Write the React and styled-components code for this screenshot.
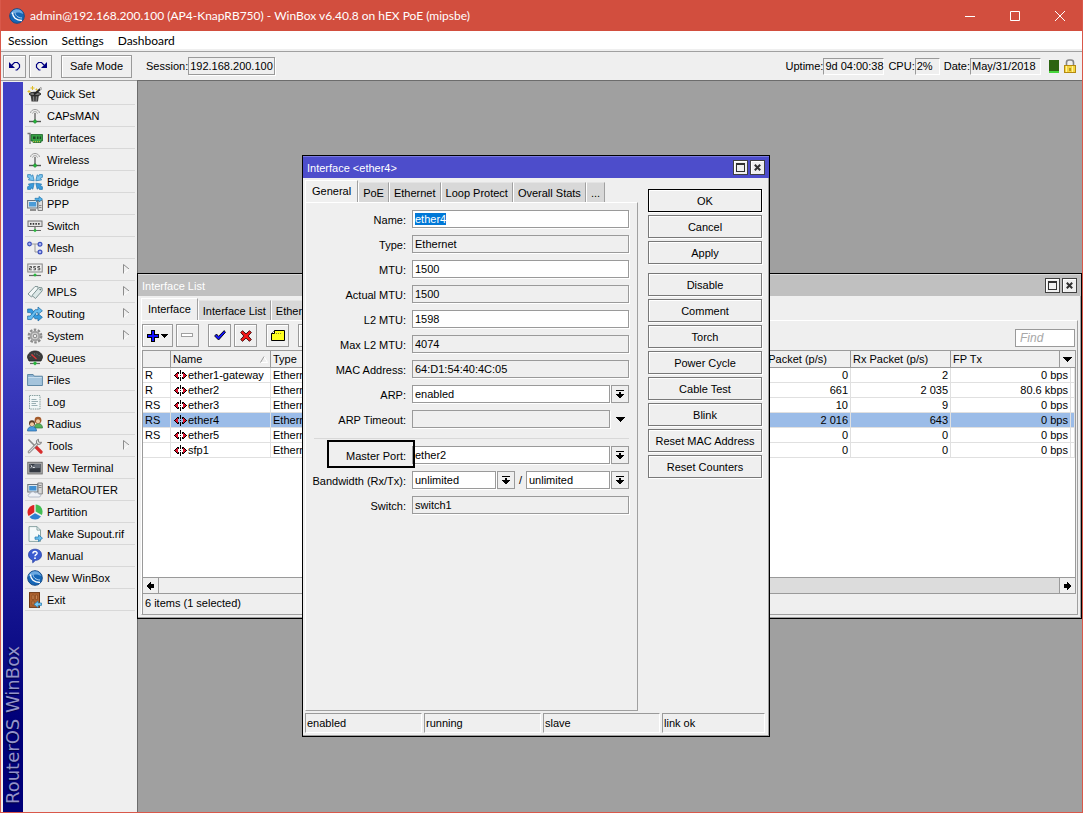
import React, { useEffect, useRef, useState } from 'react';
import styled, { createGlobalStyle, css } from 'styled-components';

const GlobalStyle = createGlobalStyle`
  * {
    box-sizing: border-box;
  }
  body {
    margin: 0;
    background: #a0a0a0;
  }
  body, button, input, select, table {
    font-family: 'Liberation Sans', Arial, sans-serif;
    font-size: 11px;
    line-height: 14px;
    color: #000;
  }
  button {
    padding: 0;
    margin: 0;
  }
  svg {
    flex: none;
  }
`;

/* ---------- icons ---------- */

const Svg = ({ size = 16, children, ...rest }) => (
  <svg width={size} height={size} viewBox={`0 0 ${size} ${size}`} fill="none" aria-hidden="true" {...rest}>
    {children}
  </svg>
);

const WinBoxIcon = () => (
  <Svg>
    <circle cx="8" cy="8" r="7.3" fill="#1667b7" stroke="#164a86" strokeWidth="1" />
    <path d="M1.500 6.500C2 3.500 5 1.300 8 1.300c3 0 5.500 2 6.300 4.700C11 3.800 6 3.800 1.500 6.500z" fill="#6aa9e2" />
    <path d="M3.500 4.500c0 4.500 3.500 8 9.500 8" stroke="#fff" strokeWidth="1.300" />
    <path d="M6 4.500c.3 3 2.800 5.300 7 5.500" stroke="#b5d5f2" strokeWidth="1" />
  </Svg>
);

const WandIcon = () => (
  <Svg>
    <path d="M3.500 8h8.500l-1 7.500H4.500z" fill="#3f3f3f" />
    <ellipse cx="8" cy="8" rx="5.800" ry="1.700" fill="#777" stroke="#222" />
    <path d="M6.500 10.500l.2 4.500M9.500 10.500l-.3 4.500" stroke="#999" strokeWidth=".8" />
    <path d="M7 8.500L14.500 2" stroke="#222" strokeWidth="1.800" />
    <path d="M13 3.400l1.500-1.400" stroke="#ddd" strokeWidth="1.400" />
    <path d="M5.500 0v4M3.500 2h4M2 4v3M.5 5.500h3M9.500 2.500v2M8.500 3.500h2" stroke="#dfbd26" />
  </Svg>
);

const AntennaIcon = () => (
  <Svg>
    <path d="M3.500 5C4 2.500 6 1.500 8 1.500S12 2.500 12.500 5M5.500 5.500C6 4 7 3.700 8 3.700s2 .3 2.500 1.800" stroke="#9a9a9a" />
    <path d="M8 5v8" stroke="#777" strokeWidth="1.600" />
    <path d="M2 13.500h12" stroke="#555" strokeWidth="1.400" />
    <path d="M6 13.500L8 11.500l2 2-2 2z" fill="#22b83a" stroke="#12761f" strokeWidth=".6" />
  </Svg>
);

const CardIcon = () => (
  <Svg>
    <path d="M.5 3.500H3V14" stroke="#777" strokeWidth="1.400" />
    <path d="M4 4.500h11.500V11H14v1.500H6V11H4z" fill="#35a045" stroke="#1c6328" strokeWidth=".8" />
    <path d="M6 6.500h2.500V9H6zM10 6.500h1.500V9H10zM12.700 6.500H14V9h-1.300z" fill="#1d4a26" />
    <path d="M6 11.700h8" stroke="#d7c441" strokeDasharray="1 1" />
  </Svg>
);

const BridgeIcon = () => (
  <Svg>
    <g stroke="#2577ad" strokeWidth=".7">
      <path d="M.6.6h3l.8 1.500L5.800.8l1.400 6-5.900-.9 1.400-1.500L.6 3.300z" fill="#7cc5ee" />
      <path d="M15.400.6h-3l-.8 1.500L10.200.8l-1.400 6 5.900-.9-1.400-1.500 2.100-1.100z" fill="#7cc5ee" />
      <path d="M.6 15.400h3l.8-1.500 1.400 1.300 1.400-6-5.900.9 1.400 1.500-2.100 1.100z" fill="#3b9bdc" />
      <path d="M15.400 15.400h-3l-.8-1.500-1.400 1.300-1.400-6 5.900.9-1.400 1.500 2.100 1.100z" fill="#3b9bdc" />
    </g>
  </Svg>
);

const PppIcon = () => (
  <Svg>
    <path d="M11 4.500h4.500v10H11z" fill="#dcdcdc" stroke="#777" strokeWidth=".9" />
    <path d="M12 9.500h2.500M12 11.500h2.500" stroke="#888" />
    <rect x=".6" y="4.500" width="10" height="7.500" fill="#dbe7ef" stroke="#68727c" />
    <rect x="2" y="6" width="7.200" height="4.500" fill="#4b9cd8" />
    <path d="M3 14h6" stroke="#777" strokeWidth="1.600" />
    <path d="M8 3.500V2.300h4V.5l3.500 2.700L12 6V4.300H9.500V6" fill="#55b4ea" stroke="#1b71aa" strokeWidth=".7" />
  </Svg>
);

const SwitchIcon = () => (
  <Svg>
    <rect x="1" y="3" width="14" height="5.500" fill="#e5e5e5" stroke="#707070" />
    <path d="M3 5.800h10" stroke="#333" strokeWidth="1.800" strokeDasharray="1.500 1.200" />
    <path d="M2 12.500h12M8 9v3" stroke="#666" strokeWidth="1.200" />
    <path d="M6.200 12.500L8 10.700l1.800 1.800L8 14.300z" fill="#27b63c" />
  </Svg>
);

const MeshIcon = () => (
  <Svg>
    <path d="M4 4h8M8 4v8h3" stroke="#9a9a9a" />
    <g fill="#a9b5f1" stroke="#3d50bd" strokeWidth="1.200">
      <circle cx="2.500" cy="4" r="1.800" />
      <circle cx="13" cy="4.200" r="1.900" />
      <circle cx="13" cy="12" r="1.900" />
    </g>
  </Svg>
);

const IpIcon = () => (
  <Svg>
    <rect x=".8" y="2" width="14.400" height="8" fill="#eee" stroke="#858585" />
    <path
      d="M2.500 4.500h2V6h-2v1.800h2.300M8.800 4.500H6.700V6h1.800v1.800H6.500M13 4.500h-2.200V6h2v1.800h-2.200"
      stroke="#444"
      strokeWidth=".9"
    />
    <path d="M2 13.500h12" stroke="#666" strokeWidth="1.200" />
    <path d="M6.200 13L8 11.200 9.800 13 8 14.800z" fill="#27b63c" />
  </Svg>
);

const TagsIcon = () => (
  <Svg>
    <path d="M1 10l7-7.500 3 .2.200 2.800L4.500 13z" fill="#f3f7f7" stroke="#738a8a" strokeWidth=".9" />
    <path d="M5 11.500L12 3.500l3 .3.200 3L8.500 14.500z" fill="#dce8e8" stroke="#738a8a" strokeWidth=".9" />
    <circle cx="13.200" cy="5.600" r=".8" fill="#637575" />
  </Svg>
);

const RoutingIcon = () => (
  <Svg>
    <path
      d="M.6 3h4l5 6.500h1.400V7.500L15.400 11.300 11 15v-2.200H8L3.500 6.600H.6z"
      fill="#359be0"
      stroke="#1a659d"
      strokeWidth=".7"
    />
    <path
      d="M.6 13.500V10h2.600l5-6.300H11V1l4.400 3.800L11 8.500V6.600H9.500l-5.200 7z"
      fill="#67bdf0"
      stroke="#1a659d"
      strokeWidth=".7"
    />
  </Svg>
);

const GearIcon = () => (
  <Svg>
    <circle cx="8" cy="8" r="6.300" stroke="#8a8a8a" strokeWidth="2.200" strokeDasharray="2.500 1.458" />
    <circle cx="8" cy="8" r="4.300" fill="#d0d0d0" stroke="#a2a2a2" strokeWidth="2" />
    <circle cx="8" cy="8" r="1.800" fill="#efefef" stroke="#858585" />
  </Svg>
);

const GaugeIcon = () => (
  <Svg>
    <path d="M.5 7.500C.5 3.500 4 1 8 1s7.500 2.500 7.500 6.500L14 11H2z" fill="#3d3d3d" stroke="#222" strokeWidth=".8" />
    <path d="M3 7a5.200 4.400 0 0110 0" stroke="#888" strokeDasharray="1 1.600" />
    <path d="M4.500 4.500l5 4.500" stroke="#e03535" strokeWidth="1.200" />
    <path d="M3 13.500h10" stroke="#666" strokeWidth="1.200" />
    <path d="M5.800 13.300L8 11.200l2.200 2.100L8 15.400z" fill="#27b63c" />
  </Svg>
);

const FolderIcon = () => (
  <Svg>
    <path d="M.6 13.500v-11h5.500l1.200 1.700h8.100v9.300z" fill="#8fb4d2" stroke="#54809f" strokeWidth=".9" />
    <path d="M1.200 6h13.600v7H1.200z" fill="#a4c4dc" />
    <path d="M1.200 5.500h13.600" stroke="#c7deee" />
  </Svg>
);

const LogIcon = () => (
  <Svg>
    <rect x="2.500" y="1.500" width="10.500" height="13.500" fill="#f2f7f7" stroke="#88a0a0" strokeDasharray="1.500 .8" />
    <path d="M4.500 5.500h5M4.500 7.500h6.500M4.500 9.500h4.500M4.500 11.500h6" stroke="#9bb0b4" />
  </Svg>
);

const UsersIcon = () => (
  <Svg>
    <path d="M7.500 12c0-3 1.500-4.500 3.800-4.500S15.500 9 15.500 12z" fill="#56b05a" stroke="#2d7a36" strokeWidth=".7" />
    <circle cx="11" cy="4.200" r="3.400" fill="#a3592a" />
    <circle cx="11" cy="5.200" r="2" fill="#f2c9a0" />
    <path d="M.5 15c0-3 1.800-4.500 4.500-4.500S9.500 12 9.500 15z" fill="#4a9de0" stroke="#235f9c" strokeWidth=".7" />
    <circle cx="5" cy="7.300" r="3" fill="#5b3a22" />
    <circle cx="5" cy="8.200" r="2" fill="#f2c9a0" />
  </Svg>
);

const ToolsIcon = () => (
  <Svg>
    <path d="M1.500 1.500L8 8" stroke="#8a8a8a" strokeWidth="1.600" />
    <path d="M8.500 8.500l5.500 5.500" stroke="#d72e2e" strokeWidth="3.200" strokeLinecap="round" />
    <path d="M2 14L11 5" stroke="#777" strokeWidth="2.600" strokeLinecap="round" />
    <path d="M2 14L11 5" stroke="#dadada" strokeWidth="1.200" strokeLinecap="round" />
    <path d="M14.500 4.200a2.600 2.600 0 11-3-2.900v2.500l1.600.6z" fill="#ddd" stroke="#777" strokeWidth=".9" />
  </Svg>
);

const TerminalIcon = () => (
  <Svg>
    <rect x=".8" y="2.300" width="14.400" height="11.600" fill="#b8b8b8" stroke="#6c6c6c" />
    <rect x="2.300" y="3.800" width="11.400" height="8.600" fill="#333942" />
    <path d="M8 4h5.500v4L2.500 8.500z" fill="#656c76" />
    <path d="M3.500 5l1.600 1.200L3.500 7.400M5.800 7.500h2" stroke="#fff" strokeWidth=".8" />
  </Svg>
);

const MetaIcon = () => (
  <Svg>
    <path d="M10.800 1h4.500v11h-4.500z" fill="#d8d8d8" stroke="#777" strokeWidth=".9" />
    <path d="M11.500 3.500h3M11.500 5.500h3" stroke="#888" />
    <rect x=".8" y="2.500" width="10" height="7.500" fill="#dce7ee" stroke="#6a747d" />
    <rect x="2.200" y="4" width="7.200" height="4.500" fill="#3f8fd2" />
    <path
      d="M3 15c-2.500 0-2.500-3 0-3.200C3.500 9.500 7 9 8 11c2-1 3.500 0 3.600 1 2.600-.2 2.800 3 .4 3z"
      fill="#eef1f6"
      stroke="#9ba5b8"
      strokeWidth=".7"
    />
  </Svg>
);

const PieIcon = () => (
  <Svg>
    <path d="M7.300 8.200V1A7.200 7.200 0 001.600 12z" fill="#dd2424" />
    <path d="M8.600 7.500V.6A7.200 7.200 0 0114.800 11z" fill="#42bd52" />
    <path d="M8 9.200l6 3.200A7.400 7.400 0 012.400 12.900z" fill="#2d80d0" />
  </Svg>
);

const SupoutIcon = () => (
  <Svg>
    <path d="M2 .6h8l3.500 3.500v11.300H2z" fill="#f5fafa" stroke="#7f9c9c" strokeWidth=".9" />
    <path d="M10 .6v3.500h3.500" stroke="#7f9c9c" strokeWidth=".9" />
    <path d="M8 11h3.500V8.800l4 3.400-4 3.300v-2.200H8z" fill="#69c0f0" stroke="#2076ad" strokeWidth=".7" />
  </Svg>
);

const ManualIcon = () => (
  <Svg>
    <path
      d="M8 1.200c4 0 6.500 2.300 6.500 5.600s-2.700 5.500-6 5.500l-2.800 2.500v-3C3.200 11.300 1.500 9.500 1.500 6.800c0-3.300 2.500-5.600 6.500-5.600z"
      fill="#3a5bd0"
      stroke="#2740a6"
      strokeWidth=".8"
    />
    <path d="M5.900 5.500c0-2.700 4.300-2.500 4.200-.2C10 6.700 8 6.700 8 8.200" stroke="#fff" strokeWidth="1.400" />
    <circle cx="8" cy="10.200" r=".9" fill="#fff" />
  </Svg>
);

const DoorIcon = () => (
  <Svg>
    <rect x="2.500" y=".6" width="10" height="14.800" fill="#ae6330" stroke="#6e3814" />
    <path d="M5 3h2v4.500H5zM8.500 3h2v4.500h-2zM5 9h2v4H5z" fill="#c98450" stroke="#7d431b" strokeWidth=".6" />
    <path d="M14.500 11H11V9l-4 3.400 4 3.200v-2.200h3.500z" fill="#7ccaf3" stroke="#2076ad" strokeWidth=".7" />
  </Svg>
);

const UndoIcon = ({ flip }) => (
  <svg width="12" height="10" viewBox="0 0 12 10" fill="none" transform={flip ? 'scale(-1 1)' : undefined} aria-hidden="true">
    <path d="M0 1v6h6z" fill="#000080" />
    <path d="M3 4l2.500-2.500h3l2 2.200v2.600L8 9H6.500" stroke="#000080" strokeWidth="1.200" />
  </svg>
);

const LockIcon = () => (
  <svg width="12" height="14" viewBox="0 0 12 14" fill="none" aria-hidden="true">
    <path d="M2.500 7V3.500C2.500 2 3.500 1 5 1h2c1.500 0 2.500 1 2.500 2.500V7" stroke="#858585" strokeWidth="1.600" />
    <rect x=".5" y="6.500" width="11" height="7" fill="#f5d640" stroke="#b48a10" />
    <path d="M2.500 7v6M8.500 7v6" stroke="#fff0a0" />
    <path d="M6 9v3" stroke="#7d5f0a" />
  </svg>
);

const PlusIcon = () => (
  <svg width="21" height="12" viewBox="0 0 21 12" shapeRendering="crispEdges" aria-hidden="true">
    <path d="M4 0h4v4h4v4H8v4H4V8H0V4h4z" fill="#000" />
    <path d="M5 1h2v4h4v2H7v4H5V7H1V5h4z" fill="#1010ff" />
    <path d="M14 4h7v1h-1v1h-1v1h-1v1h-1V7h-1V6h-1V5h-1z" fill="#000" />
  </svg>
);

const MinusIcon = () => (
  <svg width="13" height="5" viewBox="0 0 13 5" fill="none" shapeRendering="crispEdges" aria-hidden="true">
    <rect x=".5" y=".5" width="11" height="3" fill="#fff" stroke="#a0a0a0" />
  </svg>
);

const CheckIcon = () => (
  <svg width="12" height="11" viewBox="0 0 12 11" aria-hidden="true">
    <path d="M.6 6L2.500 4l2 2.400L10.200.6l1.200 1.800L4.600 10z" fill="#1010ff" stroke="#000" strokeWidth=".9" />
  </svg>
);

const CrossIcon = () => (
  <svg width="12" height="12" viewBox="0 0 12 12" aria-hidden="true">
    <path
      d="M2.500.7L6 3.900 9.500.7l1.800 1.800L8.200 6l3.100 3.500-1.800 1.800L6 8.100l-3.500 3.200L.7 9.500 3.800 6 .7 2.500z"
      fill="#f21515"
      stroke="#300"
      strokeWidth=".9"
    />
  </svg>
);

const NoteIcon = () => (
  <svg width="14" height="11" viewBox="0 0 14 11" aria-hidden="true">
    <path d="M3.500.5h10v10H.5v-7z" fill="#ffff20" stroke="#000" />
    <path d="M.5 3.500h3v-3" fill="#fff" stroke="#000" />
    <path d="M5 3.500h6" stroke="#8c8c30" strokeDasharray="1 1" />
  </svg>
);

const PortIcon = () => (
  <svg width="13" height="11" viewBox="0 0 13 11" shapeRendering="crispEdges" aria-hidden="true">
    <path d="M0 5h1V4h1V3h1V2h2v2H4v3h1v2H3V8H2V7H1V6H0z" fill="#000" />
    <path d="M13 5h-1V4h-1V3h-1V2H8v2h1v3H8v2h2V8h1V7h1V6h1z" fill="#000" />
    <path d="M1 5h1V4h1V3h1v5H3V7H2V6H1z" fill="#e0102a" />
    <path d="M12 5h-1V4h-1V3H9v5h1V7h1V6h1z" fill="#e0102a" />
    <path d="M6 0h1v4H6zM6 5h1v1H6zM6 7h1v4H6z" fill="#000" />
  </svg>
);

const ComboIcon = () => (
  <svg width="8" height="9" viewBox="0 0 8 9" shapeRendering="crispEdges" aria-hidden="true">
    <path d="M0 0h8v1H0zM3 2h2v2h3v1H7v1H6v1H5v1H3V7H2V6H1V5H0V4h3z" fill="#000" />
  </svg>
);

const DownIcon = () => (
  <svg width="9" height="5" viewBox="0 0 9 5" shapeRendering="crispEdges" aria-hidden="true">
    <path d="M0 0h9v1H8v1H7v1H6v1H5v1H4V4H3V3H2V2H1V1H0z" fill="#000" />
  </svg>
);

const ScrollIcon = ({ right }) => (
  <svg width="7" height="8" viewBox="0 0 7 8" shapeRendering="crispEdges" transform={right ? 'scale(-1 1)' : undefined} aria-hidden="true">
    <path d="M0 3h1V2h1V1h1V0h1v2h3v4H4v2H3V7H2V6H1V5H0z" fill="#000" />
  </svg>
);

const SubmenuIcon = () => (
  <svg width="7" height="14" viewBox="0 0 7 14" fill="none" aria-hidden="true">
    <path d="M.5 10.500L6 6" stroke="#fff" />
    <path d="M.5 10.500v-9L6 6" stroke="#8c8c8c" />
  </svg>
);

const SortIcon = () => (
  <svg width="8" height="7" viewBox="0 0 8 7" fill="none" aria-hidden="true">
    <path d="M4 .5L7.500 6.500H.5" stroke="#fff" />
    <path d="M.5 6.500L4 .5" stroke="#999" />
  </svg>
);

/* ---------- main frame ---------- */

const Frame = styled.div`
  display: flex;
  flex-direction: column;
  min-height: 100vh;
  border: 1px solid #d9584a;
  border-top: 0;
  background: #efefef;
`;

const TitleBar = styled.header`
  display: flex;
  align-items: center;
  height: 31px;
  padding-left: 8px;
  background: #d24e3e;
  color: #fff;
`;

const TitleText = styled.h1`
  flex: 1;
  margin: 0 0 0 5px;
  font-family: Lato, 'Open Sans', sans-serif;
  font-size: 12px;
  font-weight: 400;
  line-height: 16px;
`;

const FrameButton = styled.button`
  width: 45px;
  height: 30px;
  display: flex;
  align-items: center;
  justify-content: center;
  border: 0;
  background: transparent;
`;

const MenuBar = styled.nav`
  display: flex;
  gap: 14px;
  height: 20px;
  padding: 2px 7px 0;
  background: #fff;
  border-bottom: 2px solid #efefef;
`;

const MenuButton = styled.button`
  border: 0;
  background: transparent;
  font-family: Lato, 'Open Sans', sans-serif;
  font-size: 12px;
  line-height: 16px;
`;

const Toolbar = styled.div`
  display: flex;
  align-items: center;
  height: 29px;
  padding: 0 6px 0 2px;
  border-top: 1px solid #a0a0a0;
`;

const raised = css`
  border: 1px solid #9a9a9a;
  background: #efefef;
  box-shadow: inset 1px 1px 0 #fff;
`;

const ToolButton = styled.button`
  ${raised}
  display: flex;
  align-items: center;
  justify-content: center;
  width: ${(props) => props.$width || 23}px;
  height: 23px;
  margin-right: ${(props) => props.$gap || 3}px;
`;

const SessionBox = styled.output`
  padding: 1px;
  border: 1px solid #9a9a9a;
  box-shadow: 1px 1px 0 #fff;
`;

const Stats = styled.div`
  display: flex;
  align-items: center;
  margin-left: auto;
`;

const StatBox = styled.output`
  width: ${(props) => props.$width}px;
  height: 17px;
  padding: 0 1px;
  margin-right: 4px;
  border: 1px solid #fff;
  border-top-color: #9a9a9a;
  border-left-color: #9a9a9a;
  white-space: nowrap;
`;

const LoadMeter = styled.div`
  width: 10px;
  height: 13px;
  margin: 0 5px 0 4px;
  background: #2c6411;
  border-bottom: 2px solid #47d63c;
`;

const Main = styled.main`
  flex: 1;
  display: flex;
`;

/* ---------- sidebar ---------- */

const Sidebar = styled.aside`
  flex: none;
  display: flex;
  gap: 2px;
  width: 136px;
  padding-left: 2px;
  border-top: 1px solid #a0a0a0;
`;

const Brand = styled.div`
  display: flex;
  width: 20px;
  margin-top: 1px;
  padding-top: 8px;
  writing-mode: vertical-rl;
  transform: rotate(180deg);
  background: linear-gradient(to top, #4040c4 0, #4040c4 260px, #000078 640px);
  color: #9393c8;
  font-family: 'DejaVu Sans', sans-serif;
  font-size: 18px;
  line-height: 20px;
  text-shadow: -1px -1px 1px #000040;
`;

const SideMenu = styled.ul`
  width: 110px;
  margin: 0;
  padding: 2px 0 0;
  list-style: none;
`;

const SideItem = styled.li`
  height: 22px;
  border-bottom: 1px solid #d8d8d8;
`;

const SideButton = styled.button`
  display: flex;
  align-items: center;
  gap: 4px;
  width: 100%;
  height: 21px;
  padding: 0 5px 0 2px;
  border: 0;
  background: transparent;
  text-align: left;
`;

const SideLabel = styled.span`
  flex: 1;
  white-space: nowrap;
`;

/* ---------- inner windows ---------- */

const Desktop = styled.section`
  position: relative;
  flex: 1;
  min-height: 660px;
  overflow: hidden;
  background: #a0a0a0;
  box-shadow: inset 1px 1px 0 #6c6c6c;
`;

const Window = styled.section`
  position: absolute;
  display: flex;
  flex-direction: column;
  border: 1px solid #000;
  background: #efefef;
  box-shadow: inset -1px -1px 0 #a0a0a0;
`;

const ListWindow = styled(Window)`
  left: 0;
  right: 0;
  top: 193px;
  height: 346px;
`;

const Dialog = styled(Window)`
  left: 165px;
  top: 75px;
  width: 468px;
  height: 582px;
`;

const WindowTitle = styled.div`
  display: flex;
  align-items: center;
  gap: 2px;
  height: 22px;
  padding: 0 4px;
  background: ${(props) => (props.$active ? '#4d4dcb' : '#c0c0c0')};
  border-top: 1px solid ${(props) => (props.$active ? '#7a7ae0' : '#d8d8d8')};
  color: #fff;

  h2 {
    flex: 1;
    margin: 0;
    font-size: 11px;
    font-weight: 400;
  }
`;

const WindowButton = styled.button`
  display: flex;
  align-items: center;
  justify-content: center;
  width: 15px;
  height: 15px;
  border: 1px solid #404040;
  background: #efefef;
  box-shadow: inset 1px 1px 0 #fff;
`;

const Tabs = styled.div`
  display: flex;
  align-items: flex-end;
  height: 22px;
`;

const Tab = styled.button`
  height: ${(props) => (props.$active ? 23 : 20)}px;
  margin-bottom: ${(props) => (props.$active ? -1 : 0)}px;
  padding: ${(props) => (props.$active ? '0 6px 2px' : '0 4px')};
  border: 0;
  border-right: 1px solid #a0a0a0;
  border-left: 1px solid #fff;
  border-top: 1px solid ${(props) => (props.$active ? '#fff' : '#e4e4e4')};
  background: ${(props) => (props.$active ? '#efefef' : '#d8d8d8')};
  white-space: nowrap;
`;

const TabPanel = styled.div`
  flex: 1;
  display: flex;
  flex-direction: column;
  border: 1px solid #a0a0a0;
  border-top-color: #fff;
  border-left-color: #fff;
`;

/* ---------- interface list ---------- */

const ListBody = styled.div`
  flex: 1;
  display: flex;
  flex-direction: column;
  padding: 2px 3px 3px;
`;

const ListTools = styled.div`
  display: flex;
  align-items: center;
  height: 29px;
`;

const FindInput = styled.input`
  width: 60px;
  height: 18px;
  margin: 5px 2px 0 auto;
  padding: 0 4px;
  border: 1px solid #9a9a9a;
  background: #fff;
  font-size: 12px;
  font-style: italic;

  &::placeholder {
    color: #a8a8a8;
    opacity: 1;
  }
`;

const TableBox = styled.div`
  flex: 1;
  display: flex;
  flex-direction: column;
  margin-right: 1px;
  border: 1px solid #9a9a9a;
  background: #fff;
`;

const Table = styled.table`
  width: 100%;
  table-layout: fixed;
  border-collapse: separate;
  border-spacing: 0;

  th {
    height: 17px;
    padding: 0 2px;
    background: #efefef;
    border-right: 1px solid #9a9a9a;
    border-bottom: 1px solid #9a9a9a;
    font-weight: 400;
    text-align: left;
    white-space: nowrap;
  }
  th:last-child {
    padding-right: 0;
    border-right: 0;
  }
  td {
    height: 15px;
    padding: 0 2px;
    border-right: 1px solid #e0e0e0;
    border-bottom: 1px solid #e0e0e0;
    white-space: nowrap;
    overflow: hidden;
  }
`;

const Row = styled.tr`
  background: ${(props) => (props.$selected ? '#9bbce8' : '#fff')};
`;

const NumCell = styled.td`
  text-align: right;
`;

const HeadSplit = styled.span`
  display: flex;
  align-items: center;
  justify-content: space-between;
`;

const ColumnButton = styled.button`
  display: flex;
  align-items: center;
  justify-content: center;
  width: 16px;
  height: 16px;
  border: 0;
  border-left: 1px solid #9a9a9a;
  background: transparent;
`;

const PortName = styled.span`
  display: flex;
  align-items: center;
  gap: 1px;
  padding-left: 1px;
`;

const ScrollBar = styled.div`
  display: flex;
  justify-content: space-between;
  height: 16px;
  margin-top: auto;
  border-top: 1px solid #9a9a9a;
  background: #efefef;
`;

const ScrollButton = styled.button`
  display: flex;
  align-items: center;
  justify-content: center;
  width: 16px;
  border: 0;
  border-right: ${(props) => (props.$right ? '0' : '1px solid #9a9a9a')};
  border-left: ${(props) => (props.$right ? '1px solid #9a9a9a' : '0')};
  background: #efefef;
`;

const ScrollTrack = styled.div`
  width: 40%;
  margin-left: auto;
  background: #dcdcdc;
`;

const ListStatus = styled.div`
  height: 20px;
  padding: 2px;
  border-left: 1px solid #9a9a9a;
`;

/* ---------- interface dialog ---------- */

const DialogBody = styled.div`
  flex: 1;
  display: flex;
  flex-direction: column;
  gap: 2px;
  padding: 2px 4px 3px 2px;
`;

const DialogMain = styled.div`
  flex: 1;
  display: flex;
`;

const TabArea = styled.div`
  display: flex;
  flex-direction: column;
  width: 333px;
`;

const Form = styled.form`
  display: flex;
  flex-direction: column;
  gap: 7px;
  padding: 7px 8px 0 0;
`;

const FormRow = styled.div`
  position: relative;
  display: flex;
  align-items: center;
  gap: 6px;
  height: 18px;
`;

const Label = styled.label`
  flex: none;
  width: 100px;
  padding-top: 1px;
  text-align: right;
  white-space: nowrap;
`;

const Controls = styled.div`
  flex: 1;
  display: flex;
  align-items: center;
  gap: 1px;
`;

const field = css`
  flex: 1;
  min-width: 0;
  height: 18px;
  margin: 0;
  padding: 0 2px;
  border: 1px solid #9a9a9a;
  border-radius: 0;
  outline: 0;
  background: ${(props) => (props.readOnly || props.$dim ? '#efefef' : '#fff')};
  box-shadow: 1px 1px 0 #fff;
`;

const Input = styled.input`
  ${field}
  &::selection {
    background: #0078d7;
    color: #fff;
  }
`;

const Select = styled.select`
  ${field}
  appearance: none;
`;

const ComboButton = styled.button`
  display: flex;
  align-items: center;
  justify-content: center;
  flex: none;
  width: 18px;
  height: 18px;
  border: ${(props) => (props.$flat ? '0' : '1px solid #9a9a9a')};
  background: #efefef;
`;

const Slash = styled.span`
  width: 9px;
  text-align: center;
`;

const Divider = styled.hr`
  width: calc(100% - 8px);
  height: 1px;
  margin: 3px 0 0 8px;
  border: 0;
  background: #d8d8d8;
`;

const Marker = styled.div`
  position: absolute;
  left: 21px;
  top: -6px;
  width: 88px;
  height: 28px;
  border: 2px solid #000;
  pointer-events: none;
`;

const Actions = styled.div`
  flex: 1;
  display: flex;
  flex-direction: column;
  gap: 3px;
  padding: 9px 3px 0 10px;
`;

const ActionButton = styled.button`
  height: 23px;
  margin-bottom: ${(props) => (props.$last ? 6 : 0)}px;
  border: 1px solid ${(props) => (props.$primary ? '#000' : '#787878')};
  background: #efefef;
  box-shadow: inset 1px 1px 0 #fff, 1px 1px 0 #fff;
`;

const StatusBar = styled.div`
  display: grid;
  grid-template-columns: 117px 117px 117px 1fr;
  gap: 2px;
`;

const StatusCell = styled.div`
  height: 20px;
  padding: 2px 1px;
  border: 1px solid #fff;
  border-top-color: #9a9a9a;
  border-left-color: #9a9a9a;
`;

/* ---------- data ---------- */

const menuItems = [
  { name: 'Quick Set', icon: WandIcon },
  { name: 'CAPsMAN', icon: AntennaIcon },
  { name: 'Interfaces', icon: CardIcon },
  { name: 'Wireless', icon: AntennaIcon },
  { name: 'Bridge', icon: BridgeIcon },
  { name: 'PPP', icon: PppIcon },
  { name: 'Switch', icon: SwitchIcon },
  { name: 'Mesh', icon: MeshIcon },
  { name: 'IP', icon: IpIcon, sub: true },
  { name: 'MPLS', icon: TagsIcon, sub: true },
  { name: 'Routing', icon: RoutingIcon, sub: true },
  { name: 'System', icon: GearIcon, sub: true },
  { name: 'Queues', icon: GaugeIcon },
  { name: 'Files', icon: FolderIcon },
  { name: 'Log', icon: LogIcon },
  { name: 'Radius', icon: UsersIcon },
  { name: 'Tools', icon: ToolsIcon, sub: true },
  { name: 'New Terminal', icon: TerminalIcon },
  { name: 'MetaROUTER', icon: MetaIcon },
  { name: 'Partition', icon: PieIcon },
  { name: 'Make Supout.rif', icon: SupoutIcon },
  { name: 'Manual', icon: ManualIcon },
  { name: 'New WinBox', icon: WinBoxIcon },
  { name: 'Exit', icon: DoorIcon },
];

const interfaces = [
  { flags: 'R', name: 'ether1-gateway', tx: '0', rx: '2', fp: '0 bps' },
  { flags: 'R', name: 'ether2', tx: '661', rx: '2 035', fp: '80.6 kbps' },
  { flags: 'RS', name: 'ether3', tx: '10', rx: '9', fp: '0 bps' },
  { flags: 'RS', name: 'ether4', tx: '2 016', rx: '643', fp: '0 bps' },
  { flags: 'RS', name: 'ether5', tx: '0', rx: '0', fp: '0 bps' },
  { flags: '', name: 'sfp1', tx: '0', rx: '0', fp: '0 bps' },
];

const fields = [
  { id: 'type', label: 'Type:', value: 'Ethernet', locked: true },
  { id: 'mtu', label: 'MTU:', value: '1500' },
  { id: 'actual-mtu', label: 'Actual MTU:', value: '1500', locked: true },
  { id: 'l2-mtu', label: 'L2 MTU:', value: '1598' },
  { id: 'max-l2-mtu', label: 'Max L2 MTU:', value: '4074', locked: true },
  { id: 'mac', label: 'MAC Address:', value: '64:D1:54:40:4C:05', locked: true },
];

const dialogTabs = ['General', 'PoE', 'Ethernet', 'Loop Protect', 'Overall Stats', '...'];

const actions = [
  'OK',
  'Cancel',
  'Apply',
  'Disable',
  'Comment',
  'Torch',
  'Power Cycle',
  'Cable Test',
  'Blink',
  'Reset MAC Address',
  'Reset Counters',
];

const WindowHeader = ({ title, active }) => (
  <WindowTitle $active={active}>
    <h2>{title}</h2>
    <WindowButton aria-label="Maximize">
      <svg width="9" height="9" viewBox="0 0 9 9" fill="none" shapeRendering="crispEdges">
        <path d="M.5 1.500h8v7h-8zM0 .5h9" stroke="#303030" />
      </svg>
    </WindowButton>
    <WindowButton aria-label="Close">
      <svg width="7" height="7" viewBox="0 0 7 7">
        <path d="M.8.8l5.400 5.400M6.200.8L.8 6.200" stroke="#303030" strokeWidth="2" />
      </svg>
    </WindowButton>
  </WindowTitle>
);

const Combo = ({ id, value, label }) => (
  <>
    <Select id={id} aria-label={label} defaultValue={value}>
      <option>{value}</option>
    </Select>
    <ComboButton type="button" aria-label="Open list">
      <ComboIcon />
    </ComboButton>
  </>
);

const InterfaceList = () => {
  const [selected, setSelected] = useState('ether4');

  return (
    <ListWindow>
      <WindowHeader title="Interface List" />
      <ListBody>
        <Tabs>
          <Tab $active>Interface</Tab>
          <Tab>Interface List</Tab>
          <Tab>Ethernet</Tab>
        </Tabs>
        <TabPanel>
          <ListTools>
            <ToolButton $width={31} aria-label="Add">
              <PlusIcon />
            </ToolButton>
            <ToolButton $gap={9} aria-label="Remove">
              <MinusIcon />
            </ToolButton>
            <ToolButton aria-label="Enable">
              <CheckIcon />
            </ToolButton>
            <ToolButton $gap={9} aria-label="Disable">
              <CrossIcon />
            </ToolButton>
            <ToolButton $gap={9} aria-label="Comment">
              <NoteIcon />
            </ToolButton>
            <ToolButton aria-label="Filter" />
            <FindInput placeholder="Find" aria-label="Find" />
          </ListTools>
          <TableBox>
            <Table>
              <colgroup>
                <col width="28" />
                <col width="100" />
                <col width="100" />
                <col />
                <col width="100" />
                <col width="100" />
                <col width="120" />
                <col width="4" />
              </colgroup>
              <thead>
                <tr>
                  <th />
                  <th>
                    <HeadSplit>
                      Name <SortIcon />
                    </HeadSplit>
                  </th>
                  <th>Type</th>
                  <th />
                  <th>Tx Packet (p/s)</th>
                  <th>Rx Packet (p/s)</th>
                  <th colSpan="2">
                    <HeadSplit>
                      FP Tx
                      <ColumnButton aria-label="Columns">
                        <DownIcon />
                      </ColumnButton>
                    </HeadSplit>
                  </th>
                </tr>
              </thead>
              <tbody>
                {interfaces.map((item) => (
                  <Row key={item.name} $selected={item.name === selected} onClick={() => setSelected(item.name)}>
                    <td>{item.flags}</td>
                    <td>
                      <PortName>
                        <PortIcon />
                        {item.name}
                      </PortName>
                    </td>
                    <td>Ethernet</td>
                    <td />
                    <NumCell>{item.tx}</NumCell>
                    <NumCell>{item.rx}</NumCell>
                    <NumCell>{item.fp}</NumCell>
                    <td />
                  </Row>
                ))}
              </tbody>
            </Table>
            <ScrollBar>
              <ScrollButton aria-label="Scroll left">
                <ScrollIcon />
              </ScrollButton>
              <ScrollTrack />
              <ScrollButton $right aria-label="Scroll right">
                <ScrollIcon right />
              </ScrollButton>
            </ScrollBar>
          </TableBox>
          <ListStatus>6 items (1 selected)</ListStatus>
        </TabPanel>
      </ListBody>
    </ListWindow>
  );
};

const InterfaceDialog = () => {
  const nameRef = useRef(null);
  const [tab, setTab] = useState('General');

  useEffect(() => {
    nameRef.current.focus();
    nameRef.current.select();
  }, []);

  return (
    <Dialog role="dialog" aria-label="Interface">
      <WindowHeader title="Interface <ether4>" active />
      <DialogBody>
        <DialogMain>
          <TabArea>
            <Tabs>
              {dialogTabs.map((name) => (
                <Tab key={name} $active={name === tab} onClick={() => setTab(name)}>
                  {name}
                </Tab>
              ))}
            </Tabs>
            <TabPanel>
              <Form>
                <FormRow>
                  <Label htmlFor="name">Name:</Label>
                  <Controls>
                    <Input id="name" ref={nameRef} defaultValue="ether4" />
                  </Controls>
                </FormRow>
                {fields.map((item) => (
                  <FormRow key={item.id}>
                    <Label htmlFor={item.id}>{item.label}</Label>
                    <Controls>
                      <Input id={item.id} defaultValue={item.value} readOnly={item.locked} />
                    </Controls>
                  </FormRow>
                ))}
                <FormRow>
                  <Label htmlFor="arp">ARP:</Label>
                  <Controls>
                    <Combo id="arp" value="enabled" />
                  </Controls>
                </FormRow>
                <FormRow>
                  <Label htmlFor="arp-timeout">ARP Timeout:</Label>
                  <Controls>
                    <Input id="arp-timeout" $dim />
                    <ComboButton type="button" $flat aria-label="Set timeout">
                      <DownIcon />
                    </ComboButton>
                  </Controls>
                </FormRow>
                <Divider />
                <FormRow>
                  <Label htmlFor="master">Master Port:</Label>
                  <Controls>
                    <Combo id="master" value="ether2" />
                  </Controls>
                  <Marker />
                </FormRow>
                <FormRow>
                  <Label htmlFor="rx">Bandwidth (Rx/Tx):</Label>
                  <Controls>
                    <Combo id="rx" value="unlimited" />
                    <Slash>/</Slash>
                    <Combo id="tx" value="unlimited" label="Bandwidth Tx" />
                  </Controls>
                </FormRow>
                <FormRow>
                  <Label htmlFor="switch">Switch:</Label>
                  <Controls>
                    <Input id="switch" defaultValue="switch1" readOnly />
                  </Controls>
                </FormRow>
              </Form>
            </TabPanel>
          </TabArea>
          <Actions>
            {actions.map((name) => (
              <ActionButton key={name} $primary={name === 'OK'} $last={name === 'Apply'}>
                {name}
              </ActionButton>
            ))}
          </Actions>
        </DialogMain>
        <StatusBar>
          <StatusCell>enabled</StatusCell>
          <StatusCell>running</StatusCell>
          <StatusCell>slave</StatusCell>
          <StatusCell>link ok</StatusCell>
        </StatusBar>
      </DialogBody>
    </Dialog>
  );
};

const App = () => {
  return (
    <Frame>
      <GlobalStyle />
      <TitleBar>
        <WinBoxIcon />
        <TitleText>admin@192.168.200.100 (AP4-KnapRB750) - WinBox v6.40.8 on hEX PoE (mipsbe)</TitleText>
        <FrameButton aria-label="Minimize">
          <svg width="10" height="10" viewBox="0 0 10 10">
            <path d="M0 5.500h10" stroke="#fff" />
          </svg>
        </FrameButton>
        <FrameButton aria-label="Maximize">
          <svg width="10" height="10" viewBox="0 0 10 10" fill="none">
            <path d="M.5.5h9v9h-9z" stroke="#fff" />
          </svg>
        </FrameButton>
        <FrameButton aria-label="Close">
          <svg width="10" height="10" viewBox="0 0 10 10">
            <path d="M0 0l10 10M10 0L0 10" stroke="#fff" />
          </svg>
        </FrameButton>
      </TitleBar>
      <MenuBar>
        <MenuButton>Session</MenuButton>
        <MenuButton>Settings</MenuButton>
        <MenuButton>Dashboard</MenuButton>
      </MenuBar>
      <Toolbar>
        <ToolButton aria-label="Undo">
          <UndoIcon />
        </ToolButton>
        <ToolButton $gap={9} aria-label="Redo">
          <UndoIcon flip />
        </ToolButton>
        <ToolButton $width={71} $gap={14}>
          Safe Mode
        </ToolButton>
        Session:
        <SessionBox>192.168.200.100</SessionBox>
        <Stats>
          Uptime:<StatBox $width={61}>9d 04:00:38</StatBox>
          CPU:<StatBox $width={25}>2%</StatBox>
          Date:<StatBox $width={71}>May/31/2018</StatBox>
          <LoadMeter />
          <LockIcon />
        </Stats>
      </Toolbar>
      <Main>
        <Sidebar>
          <Brand>RouterOS WinBox</Brand>
          <SideMenu>
            {menuItems.map(({ name, icon: Icon, sub }) => (
              <SideItem key={name}>
                <SideButton>
                  <Icon />
                  <SideLabel>{name}</SideLabel>
                  {sub && <SubmenuIcon />}
                </SideButton>
              </SideItem>
            ))}
          </SideMenu>
        </Sidebar>
        <Desktop>
          <InterfaceList />
          <InterfaceDialog />
        </Desktop>
      </Main>
    </Frame>
  );
};

export default App;
